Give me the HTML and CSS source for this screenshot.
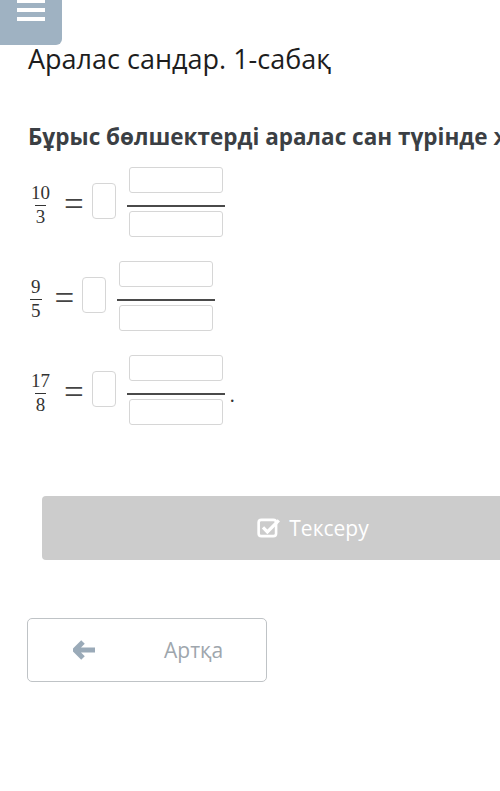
FILE: index.html
```html
<!DOCTYPE html>
<html lang="kk">
<head>
    <meta charset="UTF-8">
    <title>Аралас сандар. 1-сабақ</title>
    <link rel="stylesheet" href="styles.css">
</head>
<body>
    <div class="page">
        <div class="menu-btn">
            <span></span><span></span><span></span>
        </div>
        <h1 class="title">Аралас сандар. 1-сабақ</h1>

        <div class="task">
            <p class="question">Бұрыс бөлшектерді аралас сан түрінде жазыңыз.</p>

            <div class="row">
                <div class="frac"><span>10</span><span class="den">3</span></div>
                <div class="eq">=</div>
                <div class="whole"></div>
                <div class="answer">
                    <div class="field"></div>
                    <div class="bar"></div>
                    <div class="field"></div>
                </div>
            </div>

            <div class="row">
                <div class="frac"><span>9</span><span class="den">5</span></div>
                <div class="eq">=</div>
                <div class="whole"></div>
                <div class="answer">
                    <div class="field"></div>
                    <div class="bar"></div>
                    <div class="field"></div>
                </div>
            </div>

            <div class="row">
                <div class="frac"><span>17</span><span class="den">8</span></div>
                <div class="eq">=</div>
                <div class="whole"></div>
                <div class="answer">
                    <div class="field"></div>
                    <div class="bar"></div>
                    <div class="field"></div>
                </div>
                <div class="dot">.</div>
            </div>
        </div>

        <button class="check-btn">
            <svg width="24" height="22" viewBox="0 0 22 20">
                <rect x="1.5" y="2.5" width="16" height="15" rx="2.5" fill="none" stroke="#fff" stroke-width="2.4"/>
                <path d="M5.5 9.5 L9.5 13.5 L20 3" fill="none" stroke="#fff" stroke-width="3"/>
            </svg>
            Тексеру
        </button>

        <button class="back-btn">
            <svg width="24" height="20" viewBox="0 0 24 20">
                <path d="M10 2 L2 10 L10 18 M3 10 H22" fill="none" stroke="#9aaab8" stroke-width="5" stroke-linejoin="round"/>
            </svg>
            <span>Артқа</span>
        </button>
    </div>
</body>
</html>
```

FILE: styles.css
```css
body {
    margin: 0;
    background: #fff;
    font-family: "Open Sans", Arial, sans-serif;
    color: #222;
}
.page {
    width: 500px;
    height: 791px;
    overflow: hidden;
}
.menu-btn {
    width: 62px;
    height: 45px;
    background: #9fb2c2;
    border-bottom-right-radius: 6px;
    display: flex;
    flex-direction: column;
    align-items: center;
    justify-content: flex-start;
    gap: 5px;
    padding-top: 1px;
    box-sizing: border-box;
}
.menu-btn span {
    display: block;
    width: 28px;
    height: 4px;
    background: #fff;
}
.menu-btn span:first-child {
    margin-top: -2px;
}
.title {
    margin: -4px 0 0 28px;
    font-size: 27px;
    font-weight: 400;
    line-height: 36px;
    color: #1d1d1d;
    white-space: nowrap;
}
.task {
    margin-left: 28px;
    width: 700px;
}
.question {
    margin: 46px 0 0 0;
    font-size: 22.5px;
    font-weight: 700;
    color: #3b3f44;
    white-space: nowrap;
    line-height: 28px;
}
.row {
    display: flex;
    align-items: center;
    height: 70px;
    margin-top: 24px;
    font-family: "Liberation Serif", "Times New Roman", serif;
    color: #333;
}
.question + .row {
    margin-top: 16px;
}
.frac {
    display: flex;
    flex-direction: column;
    align-items: center;
    font-size: 19px;
    line-height: 18px;
    margin-left: 2px;
    margin-top: 5px;
}
.frac .den {
    border-top: 1.5px solid #333;
    padding: 2px 1px 0 1px;
}
.frac span:first-child {
    padding: 0 1px 3px 1px;
}
.eq {
    font-size: 35px;
    line-height: 30px;
    margin: 6px 8px 0 13px;
    color: #444;
}
.whole {
    width: 22px;
    height: 34px;
    border: 1px solid #d6d6d6;
    border-radius: 4px;
    margin-top: -3px;
}
.answer {
    margin-left: 11px;
    display: flex;
    flex-direction: column;
    align-items: center;
    width: 98px;
}
.field {
    width: 92px;
    height: 24px;
    border: 1px solid #d6d6d6;
    border-radius: 3px;
}
.bar {
    width: 98px;
    height: 2px;
    background: #4a4a4a;
    margin: 12px 0 4px 0;
}
.dot {
    font-size: 20px;
    margin-left: 5px;
    margin-top: 10px;
}
.check-btn {
    display: flex;
    align-items: center;
    justify-content: center;
    gap: 8px;
    margin: 71px 0 0 42px;
    width: 542px;
    height: 64px;
    border: none;
    border-radius: 4px;
    background: #cccccc;
    color: #fff;
    font-family: "Open Sans", Arial, sans-serif;
    font-size: 21px;
    padding: 0;
}
.back-btn {
    display: flex;
    align-items: center;
    margin: 58px 0 0 27px;
    width: 240px;
    height: 64px;
    border: 1px solid #bfc3c6;
    border-radius: 5px;
    background: #fff;
    color: #9ea6ad;
    font-family: "Open Sans", Arial, sans-serif;
    font-size: 21px;
    padding: 0 0 0 45px;
    box-sizing: border-box;
}
.back-btn span {
    margin-left: 67px;
}
```
